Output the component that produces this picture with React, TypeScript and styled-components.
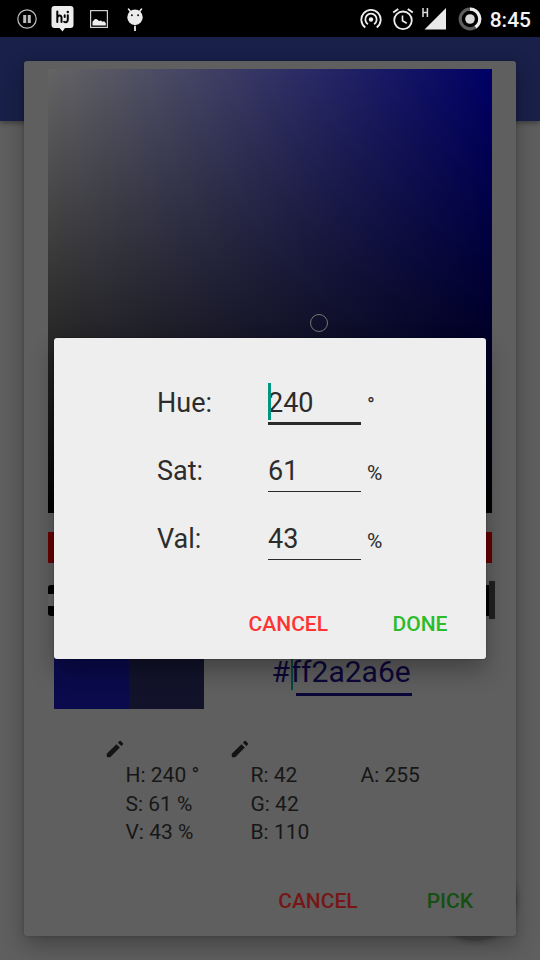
import React from "react";
import styled, { createGlobalStyle } from "styled-components";

const GlobalStyle = createGlobalStyle`
  * { box-sizing: border-box; }
  html, body { margin: 0; padding: 0; background: #5f5f5f; }
  body { font-family: Roboto, "Noto Sans", sans-serif; overflow: hidden; }
`;

const Screen = styled.div`
  position: relative;
  display: flex;
  flex-direction: column;
  width: 540px;
  height: 960px;
  overflow: hidden;
  background: #5f5f5f;
`;

const StatusBar = styled.header`
  display: flex;
  justify-content: space-between;
  height: 37px;
  padding: 0 9px 0 17px;
  background: #000;
  flex: none;
`;

const StatusGroup = styled.div`
  display: flex;
  align-items: center;
`;

const Glyph = styled.svg<{ $before?: number; $down?: number }>`
  display: block;
  flex: none;
  margin-left: ${(p) => p.$before ?? 0}px;
  margin-top: ${(p) => p.$down ?? 0}px;
`;

const Clock = styled.span`
  margin-left: 8px;
  font-size: 21px;
  font-weight: 500;
  line-height: 37px;
  padding-top: 3px;
  color: #f4f4f4;
`;

const AppBar = styled.div`
  height: 84px;
  flex: none;
  background: #192049;
  box-shadow: 0 2px 5px rgba(0, 0, 0, 0.35);
`;

const Fab = styled.div`
  position: absolute;
  right: 23px;
  bottom: 19px;
  width: 84px;
  height: 84px;
  border-radius: 50%;
  background: #484848;
  box-shadow: 0 1px 5px 1px rgba(0, 0, 0, 0.2);
`;

const PickerDialog = styled.section`
  position: absolute;
  left: 24px;
  top: 61px;
  width: 492px;
  height: 875px;
  padding: 8px 24px 0;
  display: flex;
  flex-direction: column;
  border-radius: 3px;
  background: #5f5f5f;
  box-shadow: 0 9px 22px rgba(0, 0, 0, 0.3), 0 0 3px rgba(0, 0, 0, 0.2);
`;

const ColorField = styled.div`
  position: relative;
  flex: none;
  height: 444px;
  background: linear-gradient(to bottom, rgba(0, 0, 0, 0), #000),
    linear-gradient(to right, #646464, #000066);
`;

const FieldMarker = styled.div`
  position: absolute;
  left: 262px;
  top: 244.5px;
  width: 18px;
  height: 18px;
  border: 1.5px solid #777773;
  border-radius: 50%;
`;

const HueBar = styled.div`
  flex: none;
  height: 31px;
  margin-top: 19px;
  background: linear-gradient(to right, #660000 2%, #660066, #000066, #006666, #006600, #666600, #660000 98%);
`;

const AlphaBar = styled.div`
  position: relative;
  flex: none;
  height: 31px;
  margin-top: 22px;
  border-radius: 3px;
  background: linear-gradient(to right, transparent, #000 95%),
    linear-gradient(to right, transparent 10px, #000 10px),
    linear-gradient(#000 9px, #666 9px, #666 21px, #000 21px);
`;

const AlphaThumb = styled.div`
  position: absolute;
  right: -3px;
  top: -4px;
  width: 6px;
  height: 38px;
  background: #202020;
`;

const PreviewRow = styled.div`
  display: flex;
  flex: none;
  height: 92.5px;
  padding-left: 6px;
`;

const Swatch = styled.div<{ $color: string }>`
  width: 75px;
  background: ${(p) => p.$color};
`;

const HexEntry = styled.div`
  display: flex;
  margin: 37px 0 0 67.5px;
  height: 44px;
  font-size: 30px;
  line-height: 38px;
  color: #0c0739;
`;

const HexInput = styled.div`
  position: relative;
  margin-left: 0.7px;
  width: 121px;
`;

const Caret = styled.i<{ $height: number; $color: string; $top?: number }>`
  position: absolute;
  left: 0;
  top: ${(p) => p.$top ?? 0}px;
  width: 2.7px;
  height: ${(p) => p.$height}px;
  background: ${(p) => p.$color};
`;

const HexLine = styled.div`
  height: 3px;
  margin: 2px 0 0 5.5px;
  background: #0c0739;
`;

const Details = styled.div`
  display: flex;
  flex: none;
  padding: 29.5px 0 0 55.5px;
`;

const DetailColumn = styled.div<{ $width: number }>`
  width: ${(p) => p.$width}px;
  color: #171717;
`;

const EditIcon = styled.svg`
  display: block;
  width: 22px;
  height: 22px;
`;

const IconSlot = styled.div`
  height: 23px;
`;

const DetailLine = styled.div`
  padding-left: 22px;
  height: 28.5px;
  font-size: 21px;
  line-height: 28.5px;
  white-space: nowrap;
`;

const PickerActions = styled.div`
  display: flex;
  justify-content: flex-end;
  gap: 69px;
  margin-top: auto;
  padding: 0 19px 20px 0;
`;

const ActionButton = styled.button<{ $color: string }>`
  border: 0;
  padding: 0;
  background: none;
  font: 500 21px/30px Roboto, "Noto Sans", sans-serif;
  color: ${(p) => p.$color};
`;

const ValueDialog = styled.section`
  position: absolute;
  left: 54px;
  top: 338px;
  width: 432px;
  height: 321px;
  padding: 31px 38.5px 0 103px;
  display: flex;
  flex-direction: column;
  border-radius: 3px;
  background: #eee;
  box-shadow: 0 12px 24px rgba(0, 0, 0, 0.3), 0 0 2px rgba(0, 0, 0, 0.4);
`;

const FieldRow = styled.label`
  display: grid;
  grid-template-columns: 111px 93px auto;
  height: 68px;
  font-size: 27px;
  line-height: 69px;
  color: #2c2c2c;
`;

const Value = styled.div<{ $focused: boolean }>`
  position: relative;
  height: ${(p) => (p.$focused ? 56.3 : 55)}px;
  border-bottom: ${(p) => (p.$focused ? 3 : 1.5)}px solid #2a2a2a;
`;

const Unit = styled.span`
  padding-left: 6px;
  font-size: 21px;
  line-height: 72px;
`;

const ValueActions = styled.div`
  display: flex;
  justify-content: flex-end;
  gap: 64.5px;
  margin-top: 36px;
`;

const Pencil = () => (
  <EditIcon viewBox="0 0 24 24" fill="#141414">
    <path d="M3 17.25V20q0 1 1 1h2.75L17.3 10.45l-3.75-3.75L3 17.25zM20.7 7.04c.4-.4.4-1 0-1.41l-2.33-2.34c-.4-.39-1.03-.39-1.42 0L15.2 5.05l3.75 3.75 1.75-1.76z" />
  </EditIcon>
);

const PauseIcon = () => (
  <Glyph width="20" height="20" viewBox="0 0 20 20" $down={1}>
    <circle cx="10" cy="10" r="9.2" fill="none" stroke="#bdbdbd" strokeWidth="1.2" />
    <path d="M6.2 6h3v8h-3zM10.8 6h3v8h-3z" fill="#bdbdbd" />
  </Glyph>
);

const HikeIcon = () => (
  <Glyph width="24" height="26" viewBox="0 0 24 26" $before={14}>
    <path d="M3.5 0h16q3 0 3 3v16q0 3-3 3h-5.500L11.500 25.500 8.500 22h-5q-3 0-3-3V3q0-3 3-3z" fill="#ededed" />
    <path
      d="M6.300 5.500v10.500M6.300 12c.3-3 4.200-3.300 4.200-.3v4.300M16.800 9.300v4.200c0 2.800-2.300 3.300-3.700 2.300M13.700 9.300v1.800"
      fill="none"
      stroke="#050505"
      strokeWidth="2"
      strokeLinecap="round"
    />
    <circle cx="16.800" cy="6" r="1.200" fill="#050505" />
  </Glyph>
);

const ImageIcon = () => (
  <Glyph width="18" height="18" viewBox="0 0 18 18" $before={14.500} $down={1}>
    <rect x=".6" y=".6" width="16.800" height="16.800" fill="none" stroke="#cfcfcf" strokeWidth="1.200" />
    <path d="M2.500 15.500v-3.700l2.500-2.800 2 .2 2 1.800 2-.6 1.500 1.400 1.500-.6 1.800 1.800v2.500z" fill="#efefef" />
  </Glyph>
);

const DroidIcon = () => (
  <Glyph width="16" height="24" viewBox="0 0 16 24" $before={19} $down={2}>
    <path d="M1.500 1l2.300 3M14.500 1l-2.300 3" stroke="#eee" strokeWidth="1.500" strokeLinecap="round" />
    <circle cx="8" cy="9.200" r="7.700" fill="#ececec" />
    <rect x="7.100" y="16" width="1.800" height="7" fill="#ececec" />
    <circle cx="4.900" cy="7.200" r="1" fill="#111" />
    <circle cx="11.100" cy="7.200" r="1" fill="#111" />
    <path d="M6.600 17.600h2.800" stroke="#000" strokeWidth=".8" />
  </Glyph>
);

const HotspotIcon = () => (
  <Glyph width="22" height="22" viewBox="0 0 22 22" fill="none" stroke="#eee" strokeWidth="1.800" $down={1}>
    <path d="M5.300 19.500a9.700 9.700 0 1 1 11.400 0" />
    <path d="M7.900 16.200a5.700 5.700 0 1 1 6.200 0" />
    <circle cx="11" cy="11.500" r="2.200" fill="#eee" stroke="none" />
  </Glyph>
);

const AlarmIcon = () => (
  <Glyph width="22" height="22" viewBox="0 0 22 22" fill="none" stroke="#eee" $before={10}>
    <circle cx="11" cy="12.300" r="8.800" strokeWidth="1.800" />
    <path d="M1.200 4.600L6.200.9M20.800 4.600L15.800.9" strokeWidth="1.900" />
    <path d="M10.500 7.500v5.200l4.200 2.500" strokeWidth="1.600" />
  </Glyph>
);

const SignalIcon = () => (
  <Glyph width="24" height="22" viewBox="0 0 24 22" $before={7.500} $down={1}>
    <path d="M24 0v21.500H2.500z" fill="#e9e9e9" />
    <path d="M1 0v9M5.400 0v9M1 4.400h4.400" fill="none" stroke="#ddd" strokeWidth="1.500" />
  </Glyph>
);

const BatteryIcon = () => (
  <Glyph width="24" height="24" viewBox="0 0 24 24" fill="none" $before={12}>
    <circle cx="12" cy="12" r="9.800" stroke="#5c5c5c" strokeWidth="3.200" />
    <path d="M12 2.200a9.800 9.800 0 0 1 5.500 17.900" stroke="#eee" strokeWidth="3.200" />
    <circle cx="12" cy="12" r="4.800" fill="#d8d8d8" />
  </Glyph>
);

const fields = [
  { label: "Hue:", value: "240", unit: "°", focused: true },
  { label: "Sat:", value: "61", unit: "%", focused: false },
  { label: "Val:", value: "43", unit: "%", focused: false },
];

const details = [
  { width: 125, editable: true, lines: ["H: 240 °", "S: 61 %", "V: 43 %"] },
  { width: 110, editable: true, lines: ["R: 42", "G: 42", "B: 110"] },
  { width: 110, editable: false, lines: ["A: 255"] },
];

export default function App() {
  return (
    <Screen>
      <GlobalStyle />
      <StatusBar>
        <StatusGroup>
          <PauseIcon />
          <HikeIcon />
          <ImageIcon />
          <DroidIcon />
        </StatusGroup>
        <StatusGroup>
          <HotspotIcon />
          <AlarmIcon />
          <SignalIcon />
          <BatteryIcon />
          <Clock>8:45</Clock>
        </StatusGroup>
      </StatusBar>
      <AppBar />
      <Fab />
      <PickerDialog>
        <ColorField>
          <FieldMarker />
        </ColorField>
        <HueBar />
        <AlphaBar>
          <AlphaThumb />
        </AlphaBar>
        <PreviewRow>
          <Swatch $color="#0a0a4c" />
          <Swatch $color="#12122b" />
          <HexEntry>
            <span>#</span>
            <HexInput>
              <Caret $height={37} $color="#004a40" />
              ff2a2a6e
              <HexLine />
            </HexInput>
          </HexEntry>
        </PreviewRow>
        <Details>
          {details.map((column) => (
            <DetailColumn key={column.lines[0]} $width={column.width}>
              <IconSlot>{column.editable && <Pencil />}</IconSlot>
              {column.lines.map((line) => (
                <DetailLine key={line}>{line}</DetailLine>
              ))}
            </DetailColumn>
          ))}
        </Details>
        <PickerActions>
          <ActionButton $color="#771616">CANCEL</ActionButton>
          <ActionButton $color="#154f12">PICK</ActionButton>
        </PickerActions>
      </PickerDialog>
      <ValueDialog>
        {fields.map((field) => (
          <FieldRow key={field.label}>
            <span>{field.label}</span>
            <Value $focused={field.focused}>
              {field.focused && <Caret $height={37} $top={14} $color="#009682" />}
              {field.value}
            </Value>
            <Unit>{field.unit}</Unit>
          </FieldRow>
        ))}
        <ValueActions>
          <ActionButton $color="#ff3333">CANCEL</ActionButton>
          <ActionButton $color="#2dbb29">DONE</ActionButton>
        </ValueActions>
      </ValueDialog>
    </Screen>
  );
}
